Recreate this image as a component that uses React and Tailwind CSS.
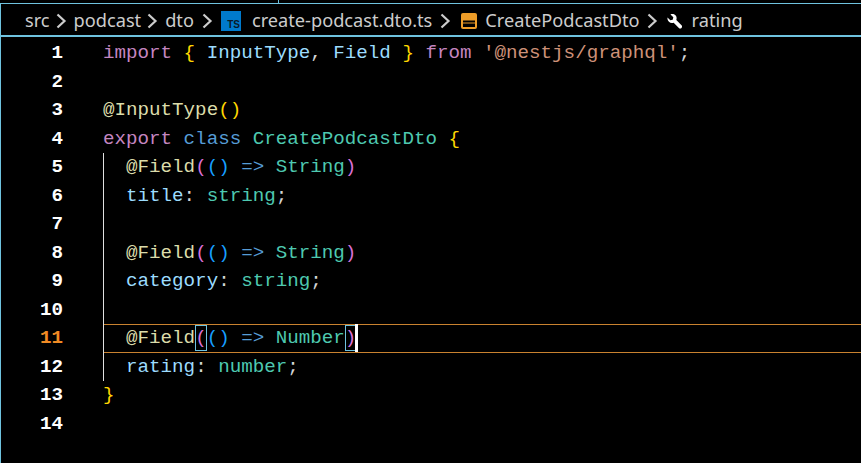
const C = {
  kw: 'text-[#c586c0]',
  blue: 'text-[#569cd6]',
  var: 'text-[#9cdcfe]',
  type: 'text-[#4ec9b0]',
  fn: 'text-[#dcdcaa]',
  str: 'text-[#ce9178]',
  gold: 'text-[#ffd700]',
  pink: 'text-[#da70d6]',
  sky: 'text-[#179fff]',
  txt: 'text-[#d4d4d4]',
}

// each line is a list of [color, text], BRACKET marks a matched pair
const lines = [
  [[C.kw, 'import'], [C.txt, ' '], [C.gold, '{'], [C.txt, ' '], [C.var, 'InputType'], [C.txt, ', '], [C.var, 'Field'], [C.txt, ' '], [C.gold, '}'], [C.txt, ' '], [C.kw, 'from'], [C.txt, ' '], [C.str, "'@nestjs/graphql'"], [C.txt, ';']],
  [],
  [[C.fn, '@InputType'], [C.gold, '()']],
  [[C.kw, 'export'], [C.txt, ' '], [C.blue, 'class'], [C.txt, ' '], [C.type, 'CreatePodcastDto'], [C.txt, ' '], [C.gold, '{']],
  [[C.txt, '  '], [C.fn, '@Field'], [C.pink, '('], [C.sky, '()'], [C.txt, ' '], [C.blue, '=>'], [C.txt, ' '], [C.type, 'String'], [C.pink, ')']],
  [[C.txt, '  '], [C.var, 'title'], [C.txt, ': '], [C.type, 'string'], [C.txt, ';']],
  [],
  [[C.txt, '  '], [C.fn, '@Field'], [C.pink, '('], [C.sky, '()'], [C.txt, ' '], [C.blue, '=>'], [C.txt, ' '], [C.type, 'String'], [C.pink, ')']],
  [[C.txt, '  '], [C.var, 'category'], [C.txt, ': '], [C.type, 'string'], [C.txt, ';']],
  [],
  [[C.txt, '  '], [C.fn, '@Field'], [C.pink, 'BRACKET('], [C.sky, '()'], [C.txt, ' '], [C.blue, '=>'], [C.txt, ' '], [C.type, 'Number'], [C.pink, 'BRACKET)']],
  [[C.txt, '  '], [C.var, 'rating'], [C.txt, ': '], [C.type, 'number'], [C.txt, ';']],
  [[C.gold, '}']],
  [],
]

const Chevron = ({ className }) => (
  <svg width="11" height="16" viewBox="0 0 11 16" className={`shrink-0 ${className}`} fill="none" stroke="#cccccc" strokeWidth="2.2">
    <path d="M1.500 1.500L8.500 8l-7 6.500" />
  </svg>
)

function Crumbs() {
  return (
    <div className="flex h-[33px] items-center pl-[24px] pt-[3px] font-['Noto_Sans',sans-serif] text-[18.2px] text-[#cccccc] border-b-2 border-[#6fc3df]">
      <span>src</span><Chevron className="ml-[6px] mr-[7px]" />
      <span>podcast</span><Chevron className="ml-[6px] mr-[7px]" />
      <span>dto</span><Chevron className="ml-[8px] mr-[8px]" />
      <span className="relative h-[20px] w-[20px] shrink-0 bg-[#007acc]">
        <span className="absolute bottom-[0px] right-[1px] font-['Liberation_Sans',sans-serif] text-[10px] leading-[12px] font-bold text-[#0a1a2a]">TS</span>
      </span>
      <span className="ml-[11px]">create-podcast.dto.ts</span><Chevron className="ml-[8px] mr-[10px]" />
      <svg width="16" height="16" viewBox="0 0 16 16" className="shrink-0">
        <rect width="16" height="16" rx="2" fill="#ee9d28" />
        <rect x="2" y="7.500" width="12" height="2" fill="#000" />
        <rect x="2" y="10.500" width="12" height="3.500" fill="#000" />
      </svg>
      <span className="ml-[8px]">CreatePodcastDto</span><Chevron className="ml-[7px] mr-[8px]" />
      <svg width="17" height="17" viewBox="0 0 16 16" className="shrink-0 -scale-x-100" fill="#ffffff">
        <path d="M14.600 4.200l-2.700 2.700-2.200-.6-.6-2.200 2.700-2.700C10.200.7 8.300 1 7.100 2.200 5.900 3.400 5.700 5.100 6.300 6.600L1.400 11.500c-.7.700-.7 1.800 0 2.500s1.800.7 2.500 0l4.900-4.900c1.500.6 3.200.4 4.400-.8 1.200-1.200 1.600-3 1.400-4.100z" />
      </svg>
      <span className="ml-[9px]">rating</span>
    </div>
  )
}

function Code({ parts }) {
  return parts.map(([cls, text], i) => {
    if (text.startsWith('BRACKET')) {
      return <span key={i} className={`${cls} inline-block h-[26px] align-top outline outline-1 -outline-offset-1 outline-[#6fc3df]`}>{text.slice(7)}</span>
    }
    return <span key={i} className={cls}>{text}</span>
  })
}

export default function App() {
  return (
    <div className="h-[463px] w-[861px] overflow-hidden bg-black">
      <div className="relative h-[3px]">
        <div className="absolute left-[278px] top-0 h-[3px] w-px bg-[#6fc3df]" />
      </div>
      <div className="h-[460px] border-t border-l border-[#6fc3df]">
        <Crumbs />
        <div className="pt-[2px] font-['Liberation_Mono',monospace] text-[19.2px] leading-[28.5px]">
          {lines.map((parts, i) => {
            const n = i + 1
            const cur = n === 11
            return (
              <div key={n} className="flex h-[28.5px]">
                <div className={`w-[62px] shrink-0 text-right font-bold ${cur ? 'text-[#f08a24]' : 'text-white'}`}>{n}</div>
                <div className={`relative ml-[40px] flex-1 whitespace-pre ${cur ? 'border-y border-[#c9822f] leading-[26.5px]' : ''}`}>
                  {n >= 5 && n <= 12 && <div className={`absolute left-0 w-px bg-[#e0e0e0] ${cur ? '-top-px -bottom-px' : 'inset-y-0'}`} />}
                  <Code parts={parts} />
                  {cur && <span className="absolute left-[252px] top-[-1px] h-[28px] w-[3px] bg-white" />}
                </div>
              </div>
            )
          })}
        </div>
      </div>
    </div>
  )
}
